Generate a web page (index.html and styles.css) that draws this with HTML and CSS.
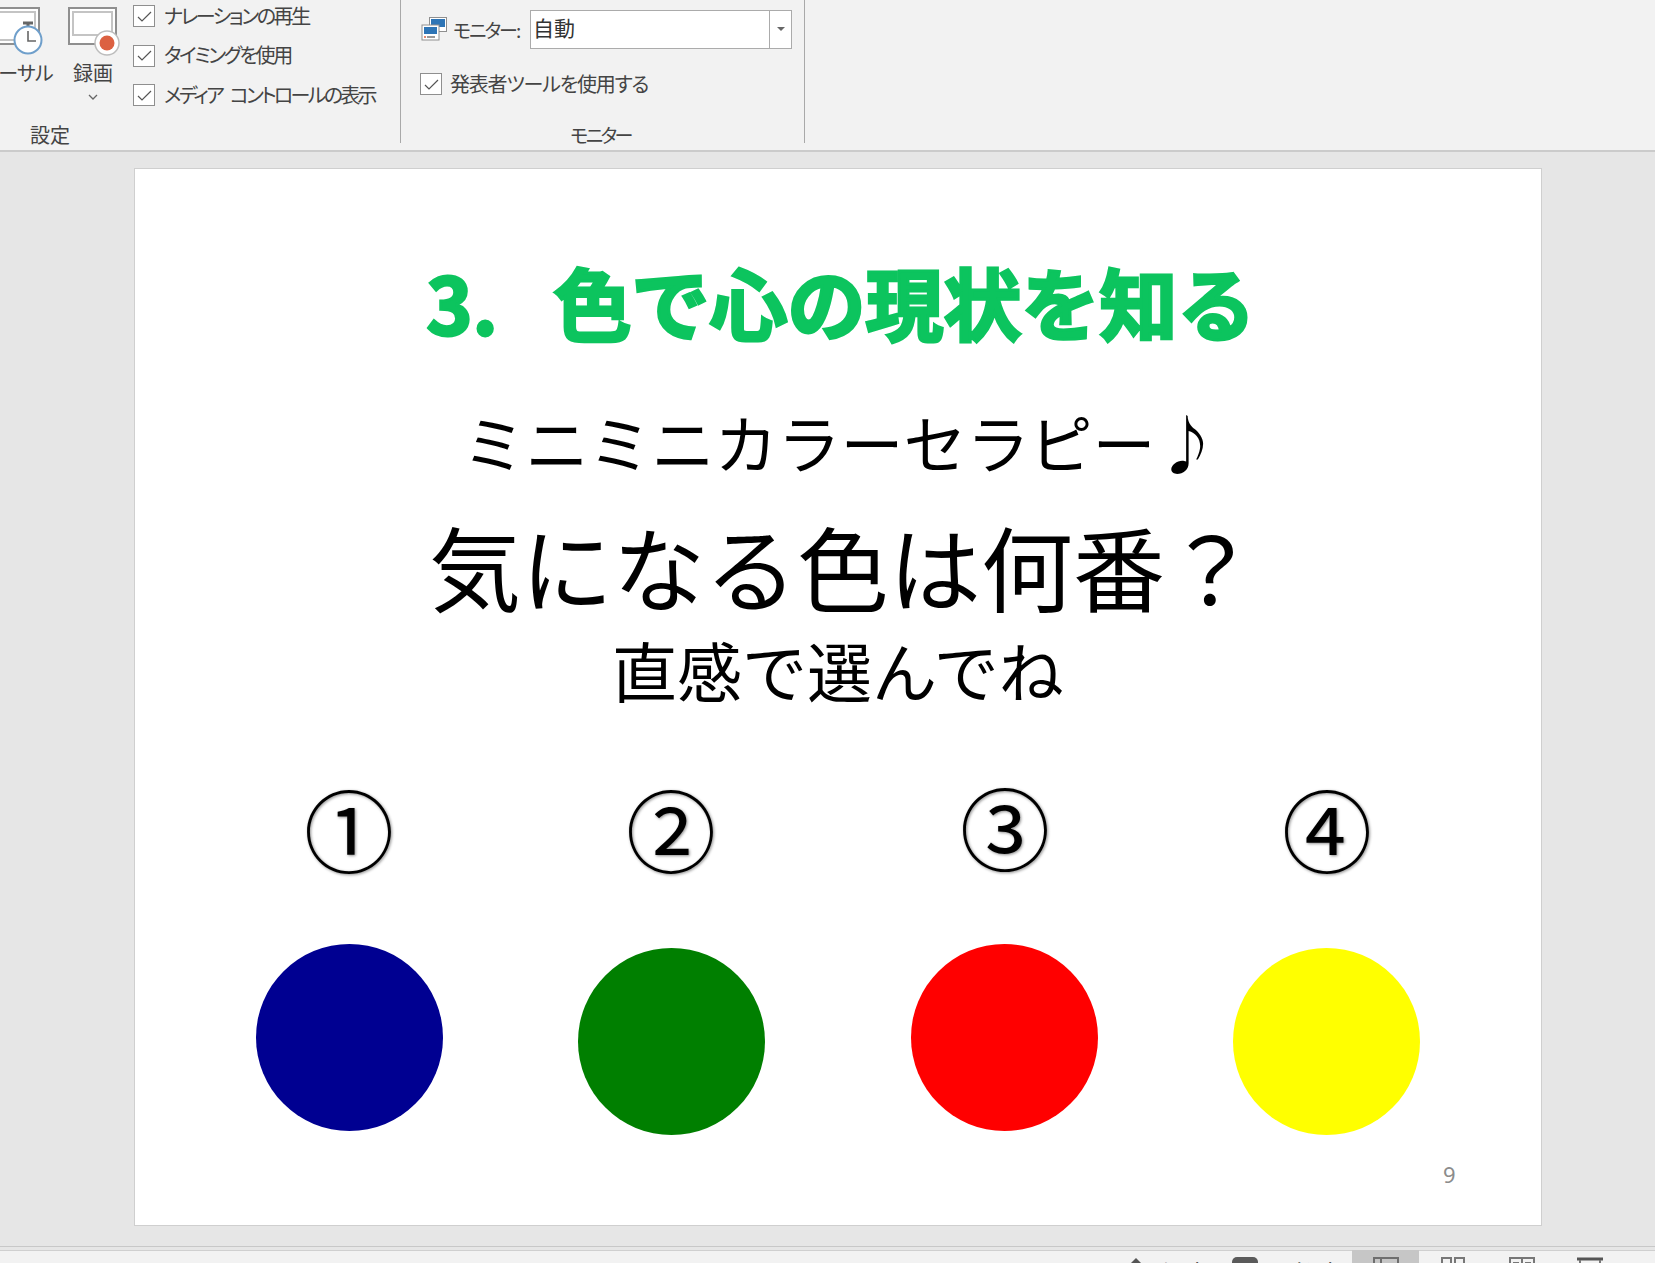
FILE: index.html
```html
<!DOCTYPE html>
<html lang="ja">
<head>
<meta charset="utf-8">
<title>PowerPoint スライド ショー</title>
<link rel="stylesheet" href="styles.css">
</head>
<body>
<header class="ribbon">
  <section class="group group-setup">
    <div class="group-body">
      <div class="rb rb-rehearse">
        <svg class="rb-icon" width="66" height="58" viewBox="0 0 66 58">
          <rect x="-14" y="8" width="53" height="36" fill="#fff" stroke="#8f8f8f" stroke-width="2"/>
          <rect x="-10" y="12" width="45" height="28" fill="#fff" stroke="#c4c4c4" stroke-width="2"/>
          <path d="M23 23h10M28 23v4" stroke="#666" stroke-width="3" fill="none"/>
          <circle cx="28" cy="40" r="13.5" fill="#fff" stroke="#6f9fcb" stroke-width="2"/>
          <path d="M28 31v10h8" stroke="#666" stroke-width="1.6" fill="none"/>
        </svg>
        <span class="rb-text rb-text-cut">リハーサル</span>
      </div>
      <div class="rb rb-record">
        <svg class="rb-icon" width="54" height="58" viewBox="-2 0 54 58">
          <rect x="1" y="8" width="47" height="36" fill="#fff" stroke="#8f8f8f" stroke-width="2"/>
          <rect x="5" y="12" width="39" height="23" fill="#fff" stroke="#c4c4c4" stroke-width="2"/>
          <circle cx="39" cy="43" r="12" fill="#fff" stroke="#bdbdbd" stroke-width="1.5"/>
          <circle cx="39" cy="43" r="7.5" fill="#dc6141"/>
        </svg>
        <span class="rb-text">録画</span>
        <svg class="chev" width="10" height="6" viewBox="0 0 10 6"><path d="M1 1l4 4 4-4" fill="none" stroke="#666" stroke-width="1.3"/></svg>
      </div>
      <div class="checks">
        <label class="chk"><span class="box"><svg width="15" height="11" viewBox="0 0 15 11"><path d="M1 6l4 4 9-9" fill="none" stroke="#555" stroke-width="1.2"/></svg></span>ナレーションの再生</label>
        <label class="chk"><span class="box"><svg width="15" height="11" viewBox="0 0 15 11"><path d="M1 6l4 4 9-9" fill="none" stroke="#555" stroke-width="1.2"/></svg></span>タイミングを使用</label>
        <label class="chk chk-media"><span class="box"><svg width="15" height="11" viewBox="0 0 15 11"><path d="M1 6l4 4 9-9" fill="none" stroke="#555" stroke-width="1.2"/></svg></span>メディア コントロールの表示</label>
      </div>
    </div>
    <div class="group-label label-setup">設定</div>
  </section>
  <section class="group group-monitor">
    <div class="monitor-body">
      <div class="monitor-row">
        <svg class="monitor-icon" width="27" height="26" viewBox="0 0 27 26">
          <rect x="8.5" y="1.5" width="17" height="14" fill="#fff" stroke="#8f8f8f"/>
          <rect x="10" y="3" width="14" height="8" fill="#2e75b6"/>
          <rect x="1" y="9" width="17" height="15" fill="#fff" stroke="#8f8f8f"/>
          <rect x="3" y="11" width="13" height="7" fill="#2e75b6"/>
          <path d="M3 21h2" stroke="#dc6141" stroke-width="1.5"/><path d="M6 21h8" stroke="#777" stroke-width="1.5"/>
        </svg>
        <span class="monitor-label">モニター:</span>
        <div class="combo"><span class="combo-value">自動</span><span class="combo-btn"><i class="caret"></i></span></div>
      </div>
      <label class="chk chk-presenter"><span class="box"><svg width="15" height="11" viewBox="0 0 15 11"><path d="M1 6l4 4 9-9" fill="none" stroke="#555" stroke-width="1.2"/></svg></span>発表者ツールを使用する</label>
    </div>
    <div class="group-label label-monitor">モニター</div>
  </section>
</header>

<main class="workspace">
  <article class="slide">
    <h1 class="title"><span class="title-num">3.</span>色で心の現状を知る</h1>
    <p class="line line-a">ミニミニカラーセラピー♪</p>
    <p class="line line-b">気になる色は何番？</p>
    <p class="line line-c">直感で選んでね</p>

    <span class="num n1">①</span>
    <span class="num n2">②</span>
    <span class="num n3">③</span>
    <span class="num n4">④</span>

    <span class="dot d1"></span>
    <span class="dot d2"></span>
    <span class="dot d3"></span>
    <span class="dot d4"></span>

    <span class="page-no">9</span>
  </article>
</main>

<footer class="status">
  <span class="st-note"><i class="tri"></i>ノート</span>
  <span class="st-comment"><i class="bubble"></i>コメント</span>
  <span class="view view-active"><svg width="26" height="14" viewBox="0 0 26 14"><path d="M1 14V1h24v13M8 1v13" fill="none" stroke="#6e6e6e" stroke-width="2"/></svg></span>
  <span class="view view-grid"><svg width="24" height="14" viewBox="0 0 24 14"><path d="M1 14V1h9v13M14 14V1h9v13" fill="none" stroke="#777" stroke-width="2"/></svg></span>
  <span class="view view-book"><svg width="26" height="14" viewBox="0 0 26 14"><path d="M1 14V1h24v13M13 1v13M4 6h6M16 6h6" fill="none" stroke="#777" stroke-width="2"/></svg></span>
  <span class="view view-show"><svg width="26" height="14" viewBox="0 0 26 14"><path d="M0 2h26" stroke="#555" stroke-width="3"/><path d="M3 3v11M23 3v11" stroke="#777" stroke-width="2"/></svg></span>
</footer>
</body>
</html>
```

FILE: styles.css
```css
* { box-sizing: border-box; }
html, body { margin: 0; padding: 0; }
body {
  width: 1655px;
  height: 1263px;
  overflow: hidden;
  display: flex;
  flex-direction: column;
  background: #e6e6e6;
  font-family: "Noto Sans CJK JP", "Noto Sans", sans-serif;
  color: #444;
}

/* ribbon */
.ribbon {
  flex: none;
  height: 152px;
  display: flex;
  background: #f2f2f2;
  border-bottom: 2px solid #cbcbcb;
  overflow: hidden;
}
.group {
  height: 143px;
  border-right: 1px solid #a9a9a9;
  display: flex;
  flex-direction: column;
  justify-content: space-between;
}
.group-setup { width: 401px; }
.group-monitor { width: 404px; }
.group-body { display: flex; height: 120px; }
.group-label {
  font-size: 20px;
  line-height: 24px;
  margin-bottom: -4px;
  text-align: center;
  font-feature-settings: "palt";
}
.label-setup { width: 100px; }
.label-monitor { font-size: 19px; letter-spacing: -2.6px; padding-right: 4px; }

.rb { display: flex; flex-direction: column; align-items: center; }
.rb-rehearse { width: 66px; align-items: flex-end; overflow: hidden; flex: none; }
.rb-record { width: 54px; flex: none; }
.rb-icon { display: block; }
.rb-text {
  font-size: 20px;
  line-height: 26px;
  margin-top: 2px;
  white-space: nowrap;
  font-feature-settings: "palt";
}
.rb-text-cut { margin-right: 13px; letter-spacing: -0.8px; }
.chev { margin-top: 8px; }

.checks {
  margin-left: 13px;
  padding-top: 5px;
  display: flex;
  flex-direction: column;
  gap: 17.5px;
}
.chk {
  display: flex;
  align-items: center;
  height: 22px;
  font-size: 20px;
  letter-spacing: -2.4px;
  padding-bottom: 2px;
  white-space: nowrap;
  font-feature-settings: "palt";
}
.chk-media { letter-spacing: -2.7px; word-spacing: 6px; }
.box {
  flex: none;
  width: 22px;
  height: 22px;
  margin: 2px 9px 0 0;
  background: #fff;
  border: 1.5px solid #8f8f8f;
  display: flex;
  align-items: center;
  justify-content: center;
}

.monitor-body { padding: 10px 0 0 20px; }
.monitor-row { display: flex; align-items: center; height: 38px; }
.monitor-icon { flex: none; }
.monitor-label {
  width: 82px;
  padding-left: 5px;
  font-size: 19px;
  letter-spacing: -2px;
  white-space: nowrap;
  font-feature-settings: "palt";
}
.combo {
  width: 262px;
  height: 39px;
  display: flex;
  background: #fff;
  border: 1.5px solid #ababab;
}
.combo-value {
  flex: 1;
  padding-left: 2px;
  font-size: 21px;
  line-height: 33px;
  color: #333;
}
.combo-btn {
  width: 22px;
  border-left: 1.5px solid #ababab;
  display: flex;
  align-items: center;
  justify-content: center;
}
.caret {
  border: 4px solid transparent;
  border-top: 4px solid #666;
  border-bottom: 0;
}
.chk-presenter { margin: 25px 0 0 -1px; letter-spacing: -1.2px; }
.chk-presenter .box { margin-right: 8px; }

/* workspace */
.workspace {
  flex: 1;
  min-height: 0;
  padding: 16px 0 0 134px;
}
.slide {
  position: relative;
  width: 1408px;
  height: 1058px;
  background: #fff;
  border: 1px solid #cfcfcf;
  overflow: hidden;
  color: #000;
}
.title, .line, .num, .dot, .page-no { position: absolute; margin: 0; }
.title, .line {
  left: 0;
  right: 0;
  text-align: center;
  white-space: nowrap;
}
.title {
  top: 77px;
  font-size: 78px;
  line-height: 110px;
  font-weight: 700;
  color: #0cc45e;
  -webkit-text-stroke: 3px #0cc45e;
  padding-left: 6px;
}
.title-num { display: inline-block; width: 127px; text-align: left; }
.line { font-weight: 400; }
.line-a { top: 228px; font-size: 63px; line-height: 88px; padding-left: 5px; }
.line-b { top: 331px; font-size: 92px; line-height: 130px; padding-left: 10px; }
.line-c { top: 454px; font-size: 65px; line-height: 92px; }

.num {
  width: 100px;
  height: 100px;
  font-size: 90px;
  line-height: 100px;
  text-align: center;
  text-shadow: 1px 1px 3px rgba(0, 0, 0, .45);
}
.n1 { left: 164px; top: 608px; }
.n2 { left: 486px; top: 608px; }
.n3 { left: 820px; top: 606px; }
.n4 { left: 1142px; top: 608px; }

.dot { width: 187px; height: 187px; border-radius: 50%; }
.d1 { left: 121px; top: 775px; background: #000091; }
.d2 { left: 443px; top: 779px; background: #007f00; }
.d3 { left: 776px; top: 775px; background: #ff0000; }
.d4 { left: 1098px; top: 779px; background: #ffff00; }

.page-no {
  left: 1308px;
  top: 990px;
  font-family: "Noto Sans", sans-serif;
  font-size: 22px;
  line-height: 30px;
  color: #8c8c8c;
}

/* status bar */
.status {
  flex: none;
  height: 17px;
  position: relative;
  display: flex;
  overflow: hidden;
  background: #f2f2f2;
  border-top: 1.5px solid #c8c8c8;
  box-shadow: inset 0 3px 0 #e6e6e6, inset 0 4px 0 #cfcfcf;
  font-size: 19px;
  color: #555;
}
.st-note, .st-comment {
  position: absolute;
  top: 9px;
  display: flex;
  gap: 8px;
  line-height: 26px;
  white-space: nowrap;
}
.st-note { left: 1128px; }
.st-comment { left: 1232px; }
.tri {
  width: 0;
  height: 0;
  margin-top: 2px;
  border: 8px solid transparent;
  border-bottom: 8px solid #555;
  border-top: 0;
}
.bubble {
  width: 26px;
  height: 20px;
  margin-top: 1px;
  border-radius: 5px;
  background: #5a5a5a;
}
.view {
  position: absolute;
  top: 3px;
  bottom: 0;
  width: 67px;
  display: flex;
  justify-content: center;
  padding-top: 7px;
}
.view-active { left: 1352px; background: #c6c6c6; }
.view-grid { left: 1419px; }
.view-book { left: 1488px; }
.view-show { left: 1556px; }
```
